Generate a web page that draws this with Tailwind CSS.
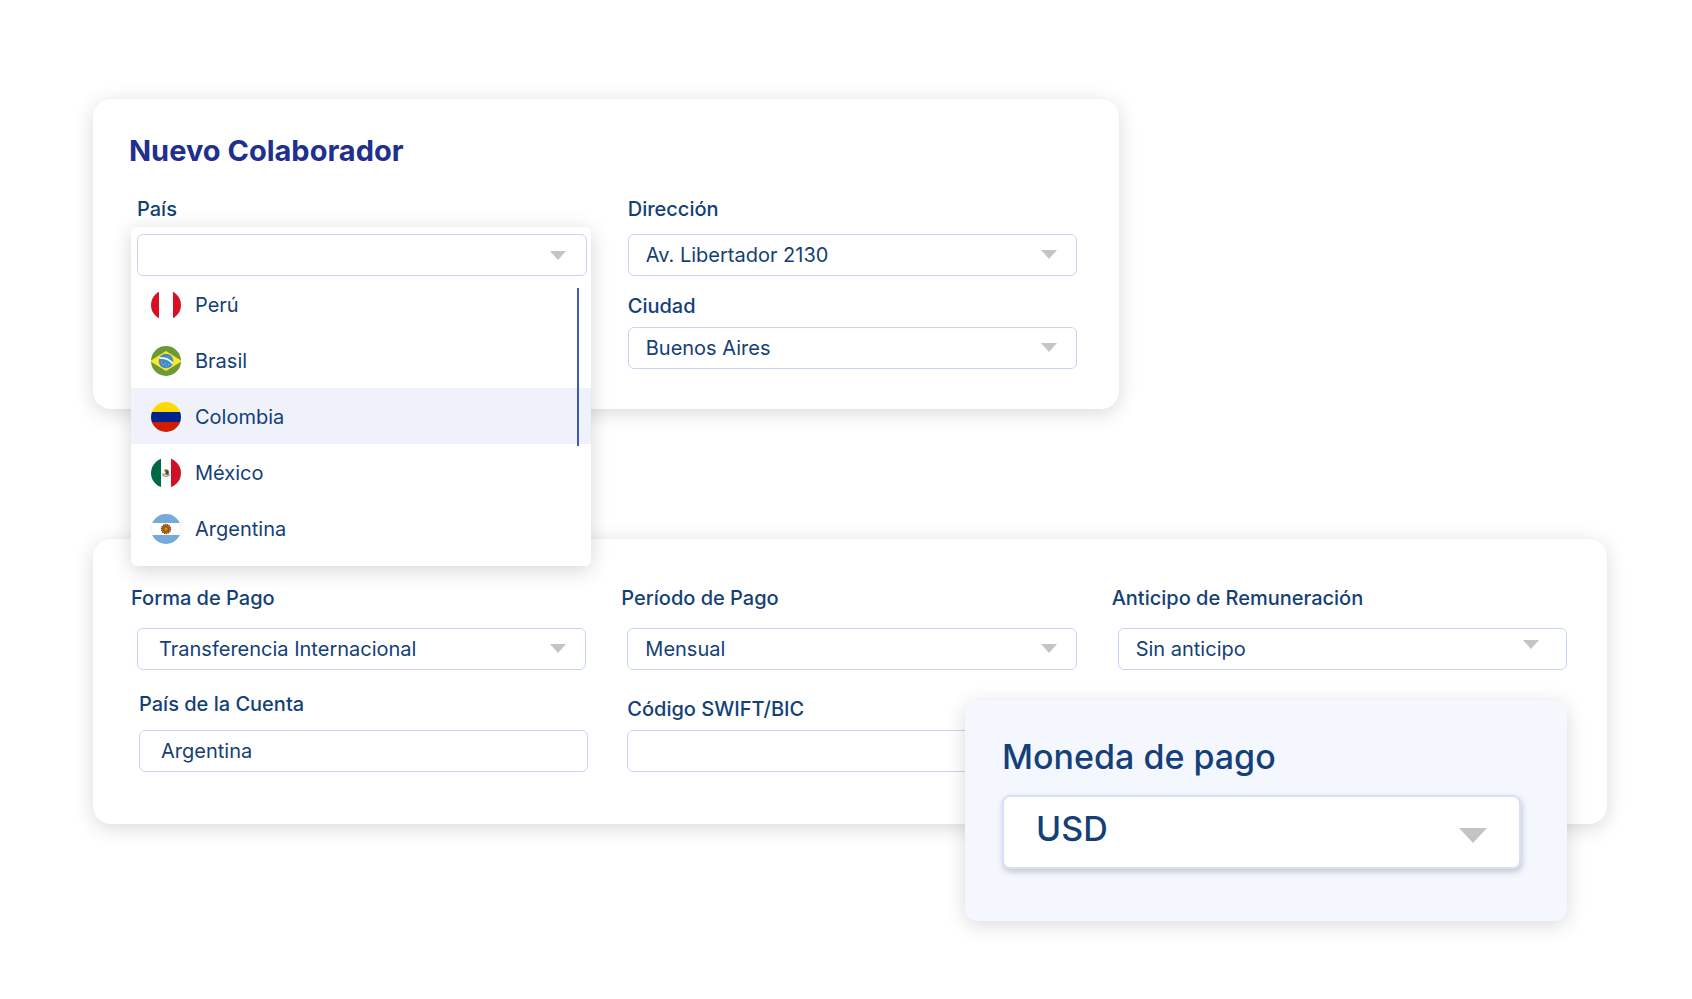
<!DOCTYPE html>
<html lang="es">
<head>
    <meta charset="UTF-8">
    <meta name="viewport" content="width=device-width, initial-scale=1.0">
    <title>Nuevo Colaborador</title>
    <script src="https://cdn.jsdelivr.net/npm/@tailwindcss/browser@4"></script>
</head>
<body class="bg-white font-['Inter',sans-serif] text-xl leading-6 text-[#143f77]">

    <main class="pt-[99px] pb-[175px] pl-[93px] pr-[85px]">

        <!-- New collaborator -->
        <section class="relative z-10 w-[67.8%] rounded-[18px] bg-white pt-[34px] pb-10 pl-11 pr-[42px] shadow-[0_4px_20px_rgba(0,0,0,0.15)]">
            <h1 class="-ml-2 text-[29px] leading-9 font-bold text-[#21308e]">Nuevo Colaborador</h1>

            <div class="mt-7 grid grid-cols-2 gap-[41px]">
                <div class="relative">
                    <label for="pais" class="block font-medium">País</label>

                    <!-- Country dropdown (open) -->
                    <div class="absolute -left-1.5 -right-1 top-[30px] rounded-md bg-white pt-[7px] pb-2.5 shadow-[0_4px_20px_rgba(0,0,0,0.17)]">
                        <div class="pl-1.5 pr-1">
                            <button id="pais" type="button" aria-haspopup="listbox" aria-expanded="true" aria-label="País" class="flex h-[42px] w-full items-center justify-end rounded-md border border-[#c6d4f7] bg-white pr-5">
                                <svg class="h-[9px] w-4" viewBox="0 0 16 9" fill="#c4c4c4"><path d="M0 0h16L8 9z"/></svg>
                            </button>
                        </div>
                        <ul role="listbox" aria-label="País">
                            <li role="option" class="flex h-14 items-center gap-3.5 pt-0.5 pl-5">
                                <svg class="size-[30px]" viewBox="0 0 30 30">
                                    <clipPath id="round"><circle cx="15" cy="15" r="15"/></clipPath>
                                    <g clip-path="url(#round)">
                                        <path fill="#fff" d="M0 0h30v30H0z"/>
                                        <path fill="#d91023" d="M0 0h8v30H0zM22 0h8v30h-8z"/>
                                    </g>
                                </svg>
                                Perú
                            </li>
                            <li role="option" class="flex h-14 items-center gap-3.5 pt-0.5 pl-5">
                                <svg class="size-[30px]" viewBox="0 0 30 30">
                                    <g clip-path="url(#round)">
                                        <path fill="#6b9934" d="M0 0h30v30H0z"/>
                                        <path fill="#ffe62e" d="M15 5l16 10-16 10L-1 15z"/>
                                        <circle cx="15" cy="15" r="7.3" fill="#428bc1"/>
                                        <path fill="none" stroke="#fff" stroke-width="1.8" d="M8.4 12.2c5-.6 10 1 13.2 5.2"/>
                                        <g fill="#b5d5ee">
                                            <circle cx="10.5" cy="16" r=".6"/><circle cx="12" cy="18.5" r=".6"/><circle cx="14.5" cy="17.5" r=".6"/>
                                            <circle cx="15.5" cy="20" r=".6"/><circle cx="17.8" cy="18.6" r=".6"/><circle cx="17" cy="11" r=".5"/>
                                        </g>
                                    </g>
                                </svg>
                                Brasil
                            </li>
                            <li role="option" aria-selected="true" class="flex h-14 items-center gap-3.5 bg-[#eff2fb] pt-0.5 pl-5">
                                <svg class="size-[30px]" viewBox="0 0 30 30">
                                    <g clip-path="url(#round)">
                                        <path fill="#ffda00" d="M0 0h30v10H0z"/>
                                        <path fill="#00238c" d="M0 10h30v10H0z"/>
                                        <path fill="#d01c00" d="M0 20h30v10H0z"/>
                                    </g>
                                </svg>
                                Colombia
                            </li>
                            <li role="option" class="flex h-14 items-center gap-3.5 pt-0.5 pl-5">
                                <svg class="size-[30px]" viewBox="0 0 30 30">
                                    <g clip-path="url(#round)">
                                        <path fill="#fff" d="M0 0h30v30H0z"/>
                                        <path fill="#006847" d="M0 0h10v30H0z"/>
                                        <path fill="#ce1126" d="M20 0h10v30H20z"/>
                                        <path fill="none" stroke="#7fae9a" stroke-width="1.2" d="M11.5 15.5c.8 3.600 6 3.900 7.200.4"/>
                                        <path fill="#8f6440" d="M13 12.500c1.200-1.400 3.200-1.700 4.300-.2 1.100 1.500 1 3.800-.6 5.200-1-.9-2.600-.8-3.300-1.600l1.300-1.300z"/>
                                        <path fill="#4b3523" d="M15.300 12.800l2 .6-.3 2.400-1.600-.8z"/>
                                        <circle cx="13" cy="16.2" r=".9" fill="#d8b169"/>
                                    </g>
                                </svg>
                                México
                            </li>
                            <li role="option" class="flex h-14 items-center gap-3.5 pt-0.5 pl-5">
                                <svg class="size-[30px]" viewBox="0 0 30 30">
                                    <g clip-path="url(#round)">
                                        <path fill="#fff" d="M0 0h30v30H0z"/>
                                        <path fill="#75aadb" d="M0 0h30v9H0zM0 21h30v9H0z"/>
                                    </g>
                                    <circle cx="15" cy="15" r="14.7" fill="none" stroke="#75aadb" stroke-opacity=".25" stroke-width=".6"/>
                                    <circle cx="15" cy="15" r="4.6" fill="#b3661b"/>
                                    <circle cx="15" cy="15" r="4.6" fill="none" stroke="#8a4310" stroke-width="1.2" stroke-dasharray="1.2 .8"/>
                                    <circle cx="15" cy="15" r="2.4" fill="#d08a1c" stroke="#7a3a0c" stroke-width=".8"/>
                                </svg>
                                Argentina
                            </li>
                        </ul>
                        <!-- Scrollbar thumb -->
                        <div class="absolute right-3 top-[61px] h-[158px] w-0.5 bg-[#4059bf]"></div>
                    </div>
                </div>

                <div>
                    <label for="direccion" class="block font-medium">Dirección</label>
                    <div class="relative mt-[13px]">
                        <select id="direccion" class="h-[42px] w-full appearance-none rounded-md border border-[#c6d4f7] bg-white pl-[17px] pr-12">
                            <option>Av. Libertador 2130</option>
                        </select>
                        <svg class="pointer-events-none absolute right-5 top-4 h-[9px] w-4" viewBox="0 0 16 9" fill="#c4c4c4"><path d="M0 0h16L8 9z"/></svg>
                    </div>
                    <label for="ciudad" class="mt-[18px] block font-medium">Ciudad</label>
                    <div class="relative mt-[9px]">
                        <select id="ciudad" class="h-[42px] w-full appearance-none rounded-md border border-[#c6d4f7] bg-white pl-[17px] pr-12">
                            <option>Buenos Aires</option>
                        </select>
                        <svg class="pointer-events-none absolute right-5 top-4 h-[9px] w-4" viewBox="0 0 16 9" fill="#c4c4c4"><path d="M0 0h16L8 9z"/></svg>
                    </div>
                </div>
            </div>
        </section>

        <!-- Payment data -->
        <section class="relative mt-[130px] rounded-[18px] bg-white pt-[47px] pb-[52px] pl-11 pr-10 shadow-[0_4px_20px_rgba(0,0,0,0.15)]">
            <div class="grid grid-cols-3 items-end gap-x-[41px] gap-y-[22px]">
                <div>
                    <label for="forma" class="-ml-1.5 block font-medium">Forma de Pago</label>
                    <div class="relative mt-[18px]">
                        <select id="forma" class="h-[42px] w-full appearance-none rounded-md border border-[#c6d4f7] bg-white pl-[21px] pr-12">
                            <option>Transferencia Internacional</option>
                        </select>
                        <svg class="pointer-events-none absolute right-5 top-4 h-[9px] w-4" viewBox="0 0 16 9" fill="#c4c4c4"><path d="M0 0h16L8 9z"/></svg>
                    </div>
                </div>
                <div>
                    <label for="periodo" class="-ml-1.5 block font-medium">Período de Pago</label>
                    <div class="relative mt-[18px]">
                        <select id="periodo" class="h-[42px] w-full appearance-none rounded-md border border-[#c6d4f7] bg-white pl-[17px] pr-12">
                            <option>Mensual</option>
                        </select>
                        <svg class="pointer-events-none absolute right-5 top-4 h-[9px] w-4" viewBox="0 0 16 9" fill="#c4c4c4"><path d="M0 0h16L8 9z"/></svg>
                    </div>
                </div>
                <div>
                    <label for="anticipo" class="-ml-1.5 block font-medium">Anticipo de Remuneración</label>
                    <div class="relative mt-[18px]">
                        <select id="anticipo" class="h-[42px] w-full appearance-none rounded-md border border-[#c6d4f7] bg-white pl-[17px] pr-12">
                            <option>Sin anticipo</option>
                        </select>
                        <svg class="pointer-events-none absolute right-7 top-3 h-[9px] w-4" viewBox="0 0 16 9" fill="#c4c4c4"><path d="M0 0h16L8 9z"/></svg>
                    </div>
                </div>
                <div class="ml-0.5 -mr-0.5">
                    <label for="cuenta" class="block font-medium">País de la Cuenta</label>
                    <input id="cuenta" type="text" value="Argentina" class="mt-3.5 block h-[42px] w-full rounded-md border border-[#c6d4f7] bg-white px-[21px]">
                </div>
                <div>
                    <label for="swift" class="block font-medium">Código SWIFT/BIC</label>
                    <input id="swift" type="text" class="mt-[9px] block h-[42px] w-full rounded-md border border-[#c6d4f7] bg-white px-[17px]">
                </div>
            </div>

            <!-- Payment currency, floats over the card corner -->
            <div class="absolute right-10 top-[161px] w-[602px] rounded-xl bg-[#f4f7fe] pt-9 pb-[52px] pl-[37px] pr-[46px] shadow-[0_4px_20px_rgba(0,0,0,0.15)]">
                <label for="moneda" class="block text-[34px] leading-[42px] font-medium">Moneda de pago</label>
                <div class="relative mt-[17px]">
                    <select id="moneda" class="h-[74px] w-full appearance-none rounded-lg border-2 border-[#d5e0fc] bg-white pb-1.5 pl-8 pr-20 text-[34px] leading-[48px] font-medium shadow-[1px_3px_6px_rgba(0,0,0,0.2)]">
                        <option>USD</option>
                    </select>
                    <svg class="pointer-events-none absolute right-[34px] top-[33px] h-[15px] w-7" viewBox="0 0 28 15" fill="#c4c4c4"><path d="M0 0h28L14 15z"/></svg>
                </div>
            </div>
        </section>
    </main>

</body>
</html>
